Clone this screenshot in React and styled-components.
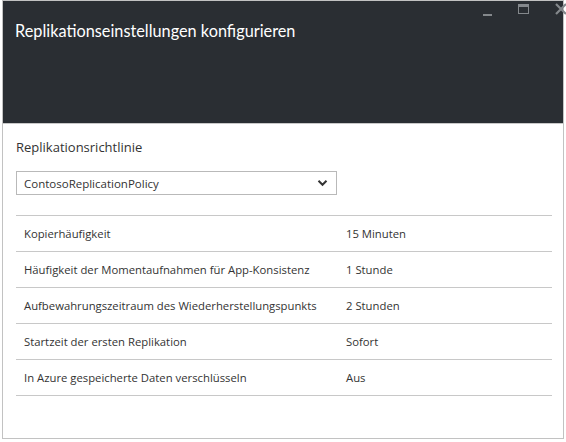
import React from 'react';
import styled, { createGlobalStyle } from 'styled-components';

const GlobalStyle = createGlobalStyle`
  html, body {
    margin: 0;
    padding: 0;
    background: #ffffff;
    overflow: hidden;
  }
  body {
    font-family: "Open Sans", "Noto Sans", "Liberation Sans", sans-serif;
    color: #333333;
  }
`;

const Window = styled.div`
  box-sizing: border-box;
  width: 562px;
  height: 439px;
  margin-left: 2px;
  border: 1px solid #c2c2c2;
  display: flex;
  flex-direction: column;
`;

const Header = styled.div`
  position: relative;
  height: 123px;
  flex: none;
  background: #2a2e33;
  border-bottom: 1px solid #c8c8c8;
  padding: 20px 0 0 12px;
  box-sizing: border-box;
`;

const Title = styled.h1`
  margin: 0;
  font-family: Lato, "Open Sans", sans-serif;
  font-size: 16.3px;
  font-weight: 400;
  color: #ffffff;
`;

const Controls = styled.div`
  position: absolute;
  top: 2px;
  right: -4px;
  display: flex;
  align-items: flex-start;
  gap: 26px;
`;

const Minimize = styled.div`
  width: 9px;
  height: 2px;
  margin-top: 11px;
  background: #84888c;
`;

const Maximize = styled.div`
  width: 9px;
  height: 6px;
  margin-top: 1px;
  border: 1px solid #84888c;
  border-top-width: 3px;
`;

const Body = styled.div`
  padding: 14px 11px 0 13px;
`;

const SectionTitle = styled.h2`
  margin: 0;
  font-size: 13px;
  font-weight: 400;
  line-height: 18px;
  color: #333333;
`;

const Select = styled.div`
  box-sizing: border-box;
  width: 321px;
  height: 24px;
  margin-top: 15px;
  border: 1px solid #b9b9b9;
  display: flex;
  align-items: center;
  justify-content: space-between;
  padding: 0 8px 0 7px;
  font-size: 11.5px;
  color: #333333;
`;

const Table = styled.div`
  margin-top: 20px;
  border-top: 1px solid #c8c8c8;
`;

const Row = styled.div`
  box-sizing: border-box;
  height: 36px;
  display: grid;
  grid-template-columns: 322px 1fr;
  align-items: center;
  padding-left: 8px;
  border-bottom: 1px solid #c8c8c8;
  font-size: 11.3px;
  color: #333333;
`;

const Chevron = () => (
  <svg width="11" height="8" viewBox="0 0 11 8">
    <path d="M1.5 1.8 L5.5 5.8 L9.5 1.8" fill="none" stroke="#333" strokeWidth="2" />
  </svg>
);

const CloseIcon = () => (
  <svg width="12" height="12" viewBox="0 0 12 12">
    <path d="M1 1 L11 11 M11 1 L1 11" stroke="#84888c" strokeWidth="2.2" />
  </svg>
);

const settings = [
  ['Kopierhäufigkeit', '15 Minuten'],
  ['Häufigkeit der Momentaufnahmen für App-Konsistenz', '1 Stunde'],
  ['Aufbewahrungszeitraum des Wiederherstellungspunkts', '2 Stunden'],
  ['Startzeit der ersten Replikation', 'Sofort'],
  ['In Azure gespeicherte Daten verschlüsseln', 'Aus'],
];

const App = () => (
  <>
    <GlobalStyle />
    <Window>
      <Header>
        <Title>Replikationseinstellungen konfigurieren</Title>
        <Controls>
          <Minimize />
          <Maximize />
          <CloseIcon />
        </Controls>
      </Header>
      <Body>
        <SectionTitle>Replikationsrichtlinie</SectionTitle>
        <Select>
          <span>ContosoReplicationPolicy</span>
          <Chevron />
        </Select>
        <Table>
          {settings.map(([label, value]) => (
            <Row key={label}>
              <span>{label}</span>
              <span>{value}</span>
            </Row>
          ))}
        </Table>
      </Body>
    </Window>
  </>
);

export default App;
